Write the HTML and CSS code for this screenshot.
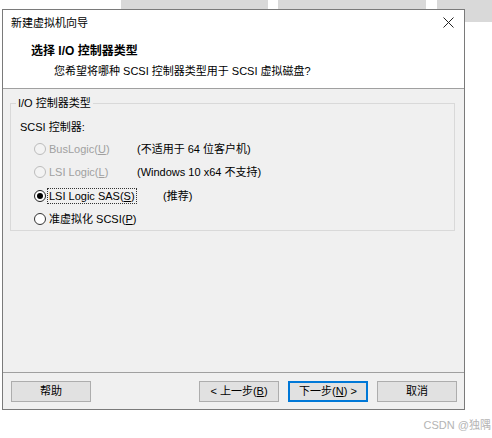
FILE: index.html
```html
<!DOCTYPE html>
<html>
<head>
<meta charset="utf-8">
<link rel="stylesheet" href="styles.css">
</head>
<body>
<div class="desk">
  <div class="bg bg1"></div>
  <div class="bg bg2"></div>
  <div class="bg bg3"></div>
</div>
<div class="dialog">
  <div class="titlebar">
    <span class="title">新建虚拟机向导</span>
    <svg class="close" width="11" height="11" viewBox="0 0 11 11"><path d="M0.5 0.5 L10.5 10.5 M10.5 0.5 L0.5 10.5" stroke="#222" stroke-width="1" fill="none"/></svg>
  </div>
  <div class="header">
    <div class="h-title">选择 I/O 控制器类型</div>
    <div class="h-sub">您希望将哪种 SCSI 控制器类型用于 SCSI 虚拟磁盘?</div>
  </div>
  <div class="body">
    <fieldset class="group">
      <legend>I/O 控制器类型</legend>
      <div class="sub">SCSI 控制器:</div>
      <div class="rows">
        <div class="row">
          <span class="radio disabled"></span><span class="lbl disabled-text">BusLogic(<u>U</u>)</span>
          <span class="note">(不适用于 64 位客户机)</span>
        </div>
        <div class="row">
          <span class="radio disabled"></span><span class="lbl disabled-text">LSI Logic(<u>L</u>)</span>
          <span class="note">(Windows 10 x64 不支持)</span>
        </div>
        <div class="row">
          <span class="radio checked"></span><span class="lbl focus">LSI Logic SAS(<u>S</u>)</span>
          <span class="note note-rec">(推荐)</span>
        </div>
        <div class="row">
          <span class="radio"></span><span class="lbl">准虚拟化 SCSI(<u>P</u>)</span>
        </div>
      </div>
    </fieldset>
  </div>
  <div class="footer">
    <button class="btn">帮助</button>
    <span class="spacer"></span>
    <button class="btn">&lt; 上一步(<u>B</u>)</button>
    <button class="btn default">下一步(<u>N</u>) &gt;</button>
    <button class="btn">取消</button>
  </div>
</div>
<div class="watermark">CSDN @独隅</div>
</body>
</html>
```

FILE: styles.css
```css
html, body {
  margin: 0;
  padding: 0;
  background: #ffffff;
}
body {
  position: relative;
  width: 492px;
  height: 438px;
  overflow: hidden;
  padding-top: 9px;
  box-sizing: border-box;
  font-family: "Liberation Sans", "Noto Sans CJK SC", sans-serif;
  font-size: 11px;
  color: #000;
}
.desk {
  position: absolute;
  left: 0;
  top: 0;
  width: 492px;
  height: 30px;
}
.bg {
  position: absolute;
  top: 0;
  background: #d9d9d9;
}
.bg1 { left: 121px; width: 147px; height: 10px; }
.bg2 { left: 278px; width: 148px; height: 10px; }
.bg3 { left: 437px; width: 55px; height: 22px; }

.dialog {
  position: relative;
  margin-left: 2px;
  width: 463px;
  height: 401px;
  box-sizing: border-box;
  border: 1px solid #7a7a7a;
  background: #f0f0f0;
  display: flex;
  flex-direction: column;
}
.titlebar {
  height: 24px;
  background: #fff;
  display: flex;
  align-items: center;
  padding-left: 8px;
  padding-right: 10px;
}
.title {
  flex: 1;
  line-height: 14px;
  padding-top: 1px;
}
.close {
  display: block;
}
.header {
  background: #fff;
  padding: 10px 0 0 28px;
  box-sizing: border-box;
  border-bottom: 1px solid #a0a0a0;
  height: 55px;
}
.h-title {
  font-weight: bold;
  font-size: 12px;
  line-height: 14px;
}
.h-sub {
  line-height: 14px;
  margin-top: 6px;
  padding-left: 23px;
}
.body {
  height: 283px;
  padding: 7px 9px 0 7px;
  box-sizing: border-box;
}
.group {
  margin: 0;
  border: 1px solid #d9d9d9;
  padding: 4px 0 0 9px;
  height: 135px;
  box-sizing: border-box;
  min-width: 0;
}
.group legend {
  padding: 0 2px;
  margin-left: -4px;
  line-height: 14px;
}
.sub {
  line-height: 14px;
  margin-top: 6px;
}
.rows {
  margin-top: 3px;
}
.row {
  height: 23.5px;
  display: flex;
  align-items: center;
  position: relative;
}
.radio {
  width: 12px;
  height: 12px;
  border: 1px solid #333;
  border-radius: 50%;
  background: #fff;
  box-sizing: border-box;
  margin-left: 14px;
  margin-right: 1px;
  position: relative;
  flex: none;
}
.radio.disabled {
  border-color: #bcbcbc;
  background: #f3f3f3;
}
.radio.checked {
  border-color: #222;
}
.radio.checked::after {
  content: "";
  position: absolute;
  left: 2px;
  top: 2px;
  width: 6px;
  height: 6px;
  border-radius: 50%;
  background: #000;
}
.lbl {
  line-height: 14px;
  padding: 0 1px;
  border: 1px solid transparent;
}
.lbl.focus {
  border: 1px dotted #333;
}
.disabled-text {
  color: #a0a0a0;
}
.note {
  position: absolute;
  left: 117px;
  line-height: 14px;
}
.note-rec {
  left: 143px;
}
.footer {
  flex: 1;
  border-top: 1px solid #a0a0a0;
  display: flex;
  align-items: flex-start;
  padding: 8px 7px 0 8px;
  gap: 9px;
}
.spacer {
  flex: 1;
}
.btn {
  width: 80px;
  height: 21px;
  box-sizing: border-box;
  border: 1px solid #adadad;
  background: #e1e1e1;
  font-family: "Liberation Sans", "Noto Sans CJK SC", sans-serif;
  font-size: 11px;
  color: #000;
  padding: 0;
  line-height: 17px;
}
.btn.default {
  border: 2px solid #0078d7;
  line-height: 15px;
}
.watermark {
  text-align: right;
  margin-top: 8px;
  padding-right: 1px;
  font-size: 11px;
  line-height: 14px;
  color: #b4b4b4;
}
```
